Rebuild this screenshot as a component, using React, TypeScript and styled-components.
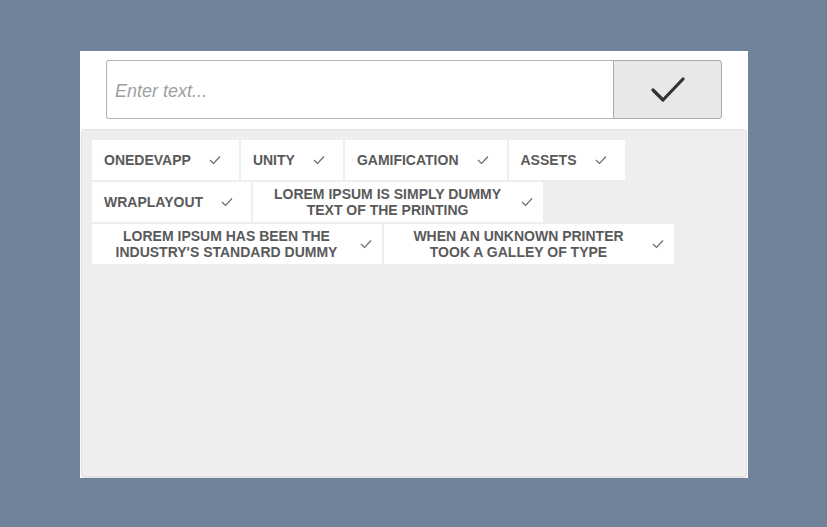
import React from "react";
import styled, { createGlobalStyle } from "styled-components";

const Global = createGlobalStyle`
  html, body { margin: 0; padding: 0; background: #71829b; }
  body { font-family: "Liberation Sans", Arial, sans-serif; }
`;

const Page = styled.div`
  width: 827px;
  height: 527px;
  padding: 51px 0 0 80px;
  box-sizing: border-box;
`;

const Card = styled.div`
  width: 668px;
  height: 427px;
  background: #ffffff;
  box-sizing: border-box;
  padding: 9px 1px 1px 1px;
  display: flex;
  flex-direction: column;
  gap: 10px;
`;

const InputRow = styled.div`
  display: flex;
  margin: 0 25px 0 25px;
  height: 59px;
`;

const TextInput = styled.input`
  flex: 1;
  min-width: 0;
  height: 100%;
  box-sizing: border-box;
  border: 1px solid #b4b4b4;
  border-right: none;
  border-radius: 3px 0 0 3px;
  padding: 3px 8px 0 8px;
  font-family: "Liberation Sans", Arial, sans-serif;
  font-size: 18px;
  color: #333;
  outline: none;
  &::placeholder {
    color: #a0a0a0;
    font-style: italic;
  }
`;

const SubmitButton = styled.button`
  width: 109px;
  height: 100%;
  box-sizing: border-box;
  border: 1px solid #aaaaaa;
  border-radius: 0 3px 3px 0;
  background: #e8e8e8;
  display: flex;
  align-items: center;
  justify-content: center;
  padding: 0;
  cursor: pointer;
`;

const TagPanel = styled.div`
  flex: 1;
  background: #eeeeee;
  border: 1px solid #e2e2e2;
  border-radius: 4px;
  box-shadow: 0 1px 1px rgba(0, 0, 0, 0.12);
  padding: 10px;
  display: flex;
  flex-wrap: wrap;
  align-content: flex-start;
  gap: 2px;
`;

const Tag = styled.div`
  display: flex;
  align-items: center;
  height: 40px;
  max-width: 290px;
  box-sizing: border-box;
  background: #ffffff;
  padding-left: 12px;
`;

const TagLabel = styled.span`
  flex: 0 0 auto;
  max-width: 245px;
  font-size: 14px;
  font-weight: bold;
  line-height: 16px;
  color: #5a5a5a;
  text-align: center;
  text-transform: uppercase;
`;

const CheckArea = styled.span`
  width: 48px;
  flex: 0 1 auto;
  min-width: 0;
  display: flex;
  align-items: center;
  justify-content: center;
`;

const TagCheck = styled.svg`
  width: 12px;
  height: 10px;
  flex-shrink: 0;
`;

const tags = [
  "OneDevApp",
  "Unity",
  "Gamification",
  "Assets",
  "WrapLayout",
  "Lorem Ipsum is simply dummy text of the printing",
  "Lorem Ipsum has been the industry's standard dummy",
  "when an unknown printer took a galley of type",
];

export default function App() {
  return (
    <>
      <Global />
      <Page>
        <Card>
          <InputRow>
            <TextInput placeholder="Enter text..." />
            <SubmitButton aria-label="Add">
              <svg width="34" height="28" viewBox="0 0 34 28">
                <path
                  d="M2 14 L12 24 L32 3"
                  fill="none"
                  stroke="#333333"
                  strokeWidth="3.2"
                  strokeLinecap="round"
                  strokeLinejoin="round"
                />
              </svg>
            </SubmitButton>
          </InputRow>
          <TagPanel>
            {tags.map((t) => (
              <Tag key={t}>
                <TagLabel>{t}</TagLabel>
                <CheckArea>
                  <TagCheck viewBox="0 0 12 10">
                    <path
                      d="M1 5 L4.5 8.5 L11 1.5"
                      fill="none"
                      stroke="#6a6a6a"
                      strokeWidth="1.2"
                    />
                  </TagCheck>
                </CheckArea>
              </Tag>
            ))}
          </TagPanel>
        </Card>
      </Page>
    </>
  );
}
